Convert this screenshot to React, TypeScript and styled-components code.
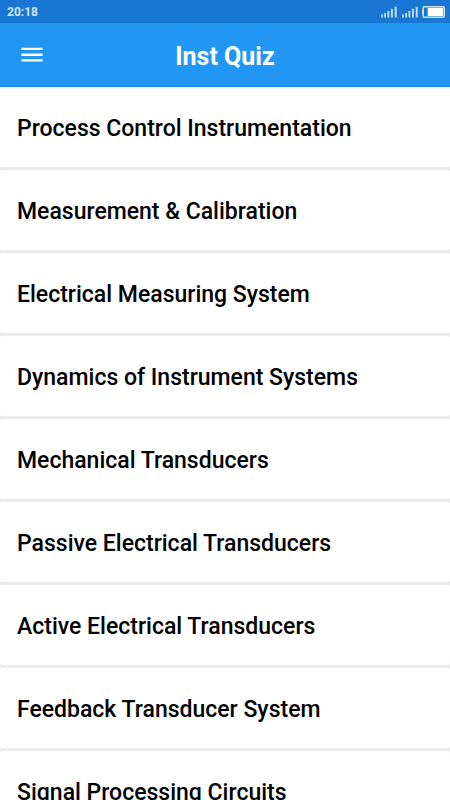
import React from "react";
import styled, { createGlobalStyle } from "styled-components";

const GlobalStyle = createGlobalStyle`
  * { box-sizing: border-box; }
  html, body, #root { height: 100%; }
  body { margin: 0; background: #ebebeb; font-family: Roboto, sans-serif; }
`;

const Screen = styled.div`
  height: 100%;
  display: flex;
  flex-direction: column;
`;

const StatusBar = styled.div`
  flex: none;
  height: 23px;
  padding: 0 5px 0 7px;
  display: flex;
  align-items: center;
  justify-content: space-between;
  background: #1976d2;
  color: #d1e4f6;
  font-size: 12px;
  font-weight: 700;
`;

const StatusIcons = styled.div`
  display: flex;
  gap: 4px;
`;

const AppBar = styled.header`
  flex: none;
  height: 64px;
  display: grid;
  grid-template-columns: 64px 1fr 64px;
  align-items: center;
  background: #2196f3;
  border-bottom: 1px solid #1589ee;
  color: #fff;
`;

const MenuButton = styled.button`
  width: 64px;
  height: 63px;
  padding: 0;
  border: 0;
  background: none;
  color: inherit;
  display: grid;
  place-items: center;
`;

const Title = styled.h1`
  margin: 0;
  padding-top: 4px;
  text-align: center;
  font-size: 25px;
  line-height: 32px;
  font-weight: 700;
`;

const TopicList = styled.ul`
  flex: 1;
  min-height: 0;
  overflow: hidden auto;
  scrollbar-width: none;
  margin: 0;
  padding: 0;
  list-style: none;
  display: flex;
  flex-direction: column;
  gap: 3px;
`;

const TopicRow = styled.li`
  flex: none;
`;

const TopicButton = styled.button`
  display: block;
  width: 100%;
  height: 80px;
  padding: 4px 17px 0;
  border: 0;
  border-radius: 2px;
  background: #fff;
  color: #000;
  text-align: left;
  font: 500 23px/32px Roboto, sans-serif;
`;

const topics = [
  "Process Control Instrumentation",
  "Measurement & Calibration",
  "Electrical Measuring System",
  "Dynamics of Instrument Systems",
  "Mechanical Transducers",
  "Passive Electrical Transducers",
  "Active Electrical Transducers",
  "Feedback Transducer System",
  "Signal Processing Circuits",
];

const Signal = () => (
  <svg width="17" height="12" viewBox="0 0 17 12" fill="#c6ddf4" aria-hidden="true">
    <path d="M1 8.5h1.8v3H1zM4.2 7h1.8v4.5H4.2zM7.5 5h1.8v6.5H7.5zM11 2.7h1.8v8.8H11zM14.7 0.7h2v10.8h-2z" />
  </svg>
);

const Battery = () => (
  <svg width="23" height="12" viewBox="0 0 23 12" aria-hidden="true">
    <path d="M0 4h1.5v4H0z" fill="#d6e6f7" />
    <rect x="1.2" y="0.7" width="21.1" height="10.6" rx="1.2" fill="none" stroke="#d6e6f7" strokeWidth="1.4" />
    <path d="M5.7 2h15.4v8H5.7z" fill="#fff" />
  </svg>
);

export default function App() {
  return (
    <>
      <GlobalStyle />
      <Screen>
        <StatusBar>
          <time>20:18</time>
          <StatusIcons>
            <Signal />
            <Signal />
            <Battery />
          </StatusIcons>
        </StatusBar>
        <AppBar>
          <MenuButton aria-label="Open menu">
            <svg width="22" height="15" viewBox="0 0 22 15" fill="#fff" aria-hidden="true">
              <path d="M0.4 0.7h21.2v2.4H0.4zM0.4 6.5h21.2v2.4H0.4zM0.4 12.2h21.2v2.4H0.4z" />
            </svg>
          </MenuButton>
          <Title>Inst Quiz</Title>
        </AppBar>
        <TopicList>
          {topics.map((topic) => (
            <TopicRow key={topic}>
              <TopicButton>{topic}</TopicButton>
            </TopicRow>
          ))}
        </TopicList>
      </Screen>
    </>
  );
}
